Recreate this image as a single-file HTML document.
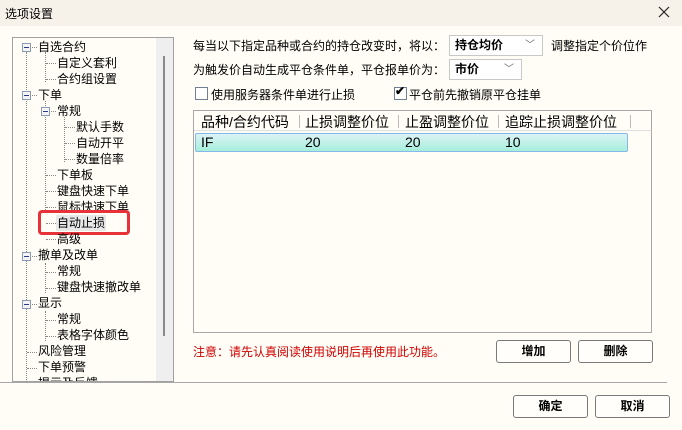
<!DOCTYPE html>
<html><head><meta charset="utf-8"><style>
*{margin:0;padding:0;box-sizing:border-box}
body{width:682px;height:430px;overflow:hidden;background:#fffdf5;font-family:"Liberation Sans","Noto Sans CJK SC",sans-serif;font-size:12px;color:#000;position:relative}
.a{position:absolute;white-space:nowrap}
.title{left:0;top:0;width:682px;height:26px;background:#f6f1e9;}
.btn{position:absolute;border:1px solid #7a7a7a;border-radius:3px;background:#fffefa;font-weight:bold;text-align:center;line-height:20px;font-size:12px}
.combo{position:absolute;border:1px solid #c8c8c8;background:#fff;font-weight:bold;padding-left:5px;line-height:19px}
.combo span{position:absolute;right:7px;top:0;font-weight:normal;color:#666;font-size:10px}
.tv{font-size:12px;line-height:16px}
.exp{position:absolute;width:9px;height:9px;border:1px solid #8a9ab0;background:#f4f4f4}
.exp:after{content:"";position:absolute;left:1px;top:3px;width:5px;height:1px;background:#2a3a8a}
.vd{position:absolute;border-left:1px dotted #888;width:0}
.hd{position:absolute;border-top:1px dotted #888;height:0}
.cb{position:absolute;width:13px;height:13px;border:1px solid #708090;background:#fff}
.t14{font-size:14px}
</style></head><body>
<div class="a title"></div>
<div class="a" style="left:5px;top:5px;font-size:12px">选项设置</div>
<svg class="a" style="left:658px;top:6px" width="12" height="12"><path d="M1 1L11 11M11 1L1 11" stroke="#222" stroke-width="1.2"/></svg>

<!-- tree -->
<div class="a" style="left:12px;top:37px;width:162px;height:345px;border:1px solid #a0a0a0;background:#fffdf5"></div>
<div class="a" style="left:156px;top:38px;width:17px;height:343px;background:#efefef"></div>
<div class="a" style="left:163px;top:56px;width:2px;height:280px;background:#8a8a8a"></div>

<div class="vd" style="left:26px;top:52px;height:330px"></div>
<div class="vd" style="left:45px;top:52px;height:30px"></div>
<div class="vd" style="left:45px;top:101px;height:111px"></div>
<div class="vd" style="left:64px;top:117px;height:45px"></div>
<div class="vd" style="left:45px;top:263px;height:30px"></div>
<div class="vd" style="left:45px;top:311px;height:30px"></div>

<div class="exp" style="left:22px;top:43px"></div>
<div class="exp" style="left:22px;top:91px"></div>
<div class="exp" style="left:41px;top:107px"></div>
<div class="exp" style="left:22px;top:252px"></div>
<div class="exp" style="left:22px;top:300px"></div>

<div class="hd" style="left:32px;top:47px;width:5px"></div>
<div class="hd" style="left:46px;top:63px;width:10px"></div>
<div class="hd" style="left:46px;top:79px;width:10px"></div>
<div class="hd" style="left:32px;top:95px;width:5px"></div>
<div class="hd" style="left:51px;top:111px;width:5px"></div>
<div class="hd" style="left:65px;top:127px;width:10px"></div>
<div class="hd" style="left:65px;top:143px;width:10px"></div>
<div class="hd" style="left:65px;top:159px;width:10px"></div>
<div class="hd" style="left:46px;top:175px;width:10px"></div>
<div class="hd" style="left:46px;top:191px;width:10px"></div>
<div class="hd" style="left:46px;top:207px;width:10px"></div>
<div class="hd" style="left:46px;top:223px;width:10px"></div>
<div class="hd" style="left:46px;top:239px;width:10px"></div>
<div class="hd" style="left:32px;top:256px;width:5px"></div>
<div class="hd" style="left:46px;top:272px;width:10px"></div>
<div class="hd" style="left:46px;top:288px;width:10px"></div>
<div class="hd" style="left:32px;top:304px;width:5px"></div>
<div class="hd" style="left:46px;top:320px;width:10px"></div>
<div class="hd" style="left:46px;top:336px;width:10px"></div>
<div class="hd" style="left:27px;top:352px;width:10px"></div>
<div class="hd" style="left:27px;top:368px;width:10px"></div>

<div class="a tv" style="left:38px;top:39px">自选合约</div>
<div class="a tv" style="left:57px;top:55px">自定义套利</div>
<div class="a tv" style="left:57px;top:71px">合约组设置</div>
<div class="a tv" style="left:38px;top:87px">下单</div>
<div class="a tv" style="left:57px;top:103px">常规</div>
<div class="a tv" style="left:76px;top:119px">默认手数</div>
<div class="a tv" style="left:76px;top:135px">自动开平</div>
<div class="a tv" style="left:76px;top:151px">数量倍率</div>
<div class="a tv" style="left:57px;top:167px">下单板</div>
<div class="a tv" style="left:57px;top:183px">键盘快速下单</div>
<div class="a tv" style="left:57px;top:199px">鼠标快速下单</div>
<div class="a tv" style="left:56px;top:215px;background:#e8e8e8;padding:0 1px">自动止损</div>
<div class="a" style="left:38px;top:210px;width:92px;height:25px;border:3px solid #e8323a;border-radius:4px"></div>
<div class="a tv" style="left:57px;top:231px">高级</div>
<div class="a tv" style="left:38px;top:247px">撤单及改单</div>
<div class="a tv" style="left:57px;top:263px">常规</div>
<div class="a tv" style="left:57px;top:279px">键盘快速撤改单</div>
<div class="a tv" style="left:38px;top:295px">显示</div>
<div class="a tv" style="left:57px;top:311px">常规</div>
<div class="a tv" style="left:57px;top:327px">表格字体颜色</div>
<div class="a tv" style="left:38px;top:343px">风险管理</div>
<div class="a tv" style="left:38px;top:359px">下单预警</div>
<div class="a" style="left:38px;top:375px;height:6px;overflow:hidden"><div class="tv">提示及反馈</div></div>

<!-- right -->
<div class="a" style="left:193px;top:37px">每当以下指定品种或合约的持仓改变时，将以：</div>
<div class="combo" style="left:449px;top:35px;width:94px;height:21px">持仓均价<span>﹀</span></div>
<div class="a" style="left:551px;top:37px">调整指定个价位作</div>
<div class="a" style="left:193px;top:61px">为触发价自动生成平仓条件单，平仓报单价为：</div>
<div class="combo" style="left:449px;top:59px;width:73px;height:21px">市价<span>﹀</span></div>
<div class="cb" style="left:195px;top:87px"></div>
<div class="a" style="left:211px;top:86px">使用服务器条件单进行止损</div>
<div class="cb" style="left:394px;top:87px"></div>
<div class="a" style="left:395px;top:84px;font-size:12px;font-weight:bold">✔</div>
<div class="a" style="left:409px;top:86px">平仓前先撤销原平仓挂单</div>

<div class="a" style="left:193px;top:110px;width:459px;height:223px;border:1px solid #a8a8a8;background:#fffdf5"></div>
<div class="a" style="left:194px;top:130px;width:457px;height:1px;background:#e0e0e0"></div>
<div class="a t14" style="left:201px;top:112px">品种/合约代码</div>
<div class="a" style="left:299px;top:115px;width:1px;height:13px;background:#bbb"></div>
<div class="a t14" style="left:305px;top:112px">止损调整价位</div>
<div class="a" style="left:398px;top:115px;width:1px;height:13px;background:#bbb"></div>
<div class="a t14" style="left:405px;top:112px">止盈调整价位</div>
<div class="a" style="left:498px;top:115px;width:1px;height:13px;background:#bbb"></div>
<div class="a t14" style="left:505px;top:112px">追踪止损调整价位</div>
<div class="a" style="left:630px;top:115px;width:1px;height:13px;background:#bbb"></div>
<div class="a" style="left:195px;top:133px;width:433px;height:19px;border:1px solid #86b8e8;border-radius:2px;background:linear-gradient(#dcf3f6,#a6eedc)"></div>
<div class="a t14" style="left:201px;top:134px">IF</div>
<div class="a t14" style="left:305px;top:134px">20</div>
<div class="a t14" style="left:405px;top:134px">20</div>
<div class="a t14" style="left:505px;top:134px">10</div>

<div class="a" style="left:193px;top:343px;color:#d00000">注意：请先认真阅读使用说明后再使用此功能。</div>
<div class="btn" style="left:496px;top:340px;width:75px;height:23px">增加</div>
<div class="btn" style="left:578px;top:340px;width:75px;height:23px">删除</div>
<div class="a" style="left:0;top:382px;width:667px;height:1px;background:#a8a8a8"></div>
<div class="btn" style="left:513px;top:395px;width:75px;height:23px">确定</div>
<div class="btn" style="left:595px;top:395px;width:75px;height:23px">取消</div>
</body></html>
